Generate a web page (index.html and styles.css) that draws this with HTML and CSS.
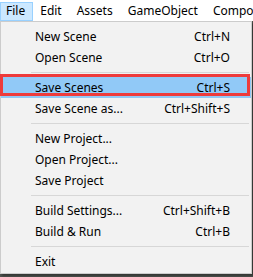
FILE: index.html
```html
<!DOCTYPE html>
<html lang="en">
<head>
    <meta charset="UTF-8">
    <title>File Menu</title>
    <link rel="stylesheet" href="styles.css">
</head>
<body>
    <!-- Menu Bar -->
    <div class="menubar">
        <span class="menubar-item active">File</span>
        <span class="menubar-item">Edit</span>
        <span class="menubar-item">Assets</span>
        <span class="menubar-item">GameObject</span>
        <span class="menubar-item">Compo</span>
    </div>

    <!-- File Menu -->
    <div class="menu">
        <div class="menu-item"><span>New Scene</span><span>Ctrl+N</span></div>
        <div class="menu-item"><span>Open Scene</span><span>Ctrl+O</span></div>
        <div class="menu-sep"></div>
        <div class="menu-item selected"><span>Save Scenes</span><span>Ctrl+S</span></div>
        <div class="menu-item"><span>Save Scene as...</span><span>Ctrl+Shift+S</span></div>
        <div class="menu-sep"></div>
        <div class="menu-item"><span>New Project...</span><span></span></div>
        <div class="menu-item"><span>Open Project...</span><span></span></div>
        <div class="menu-item"><span>Save Project</span><span></span></div>
        <div class="menu-sep"></div>
        <div class="menu-item"><span>Build Settings...</span><span>Ctrl+Shift+B</span></div>
        <div class="menu-item"><span>Build &amp; Run</span><span>Ctrl+B</span></div>
        <div class="menu-sep"></div>
        <div class="menu-item"><span>Exit</span><span></span></div>
    </div>
</body>
</html>
```
FILE: styles.css
```css
body {
    margin: 0;
    padding: 0;
    width: 253px;
    height: 277px;
    overflow: hidden;
    background-color: #4f534f;
    font-family: "Noto Sans", "Liberation Sans", sans-serif;
    font-size: 12px;
    color: #000000;
}
.menubar {
    display: flex;
    align-items: flex-end;
    height: 21px;
    background-color: #ffffff;
    white-space: nowrap;
    overflow: hidden;
}
.menubar-item {
    padding: 0 7px 1px 5px;
    margin-right: 1px;
    border: 1px solid transparent;
    line-height: 16px;
    font-size: 12px;
}
.menubar-item.active {
    background-color: #cce8ff;
    border-color: #99d1ff;
}
.menu {
    width: 250px;
    background-color: #f2f2f2;
    border: 1px solid #cccccc;
    padding: 4px 0 1px 0;
    box-shadow: 2px 2px 2px rgba(0, 0, 0, 0.35);
}
.menu-item {
    display: flex;
    justify-content: space-between;
    height: 21px;
    line-height: 21px;
    padding: 0 21px 0 34px;
}
.menu-item.selected {
    position: relative;
    background-color: #91c9f7;
}
/* red annotation box drawn over the selected row */
.menu-item.selected::after {
    content: "";
    position: absolute;
    top: -3px;
    bottom: 2px;
    left: -1px;
    right: 1px;
    border: 3px solid #ee3b3b;
}
.menu-sep {
    height: 1px;
    margin: 4px 2px 4px 30px;
    background-color: #d7d7d7;
}
```
